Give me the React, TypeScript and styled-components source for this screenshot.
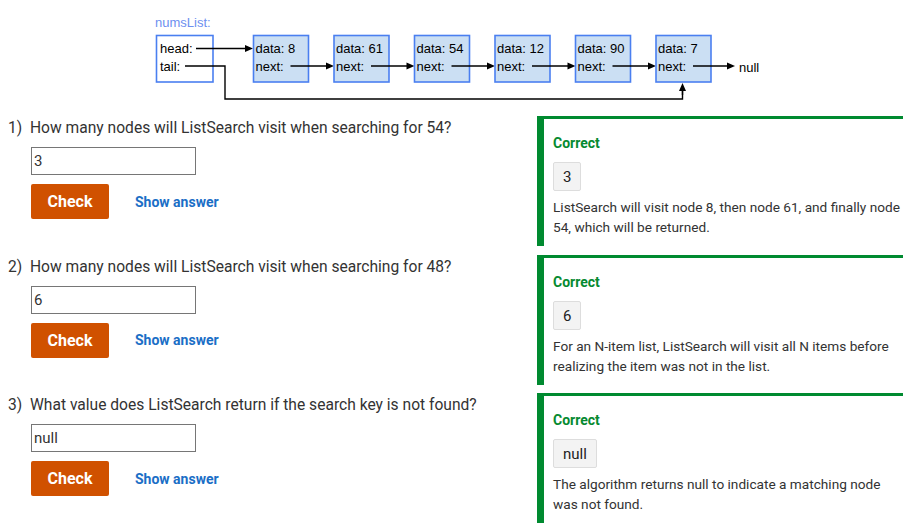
import React, { FC } from 'react';
import styled, { createGlobalStyle } from 'styled-components';

const GlobalStyle = createGlobalStyle`
	body {
		margin: 0;
		background: #ffffff;
		font-family: Roboto, 'Liberation Sans', Arial, sans-serif;
		color: #333333;
	}
`;

const Page = styled('div')`
	width: 921px;
	height: 524px;
	overflow: hidden;
`;

const Figure = styled('div')`
	height: 116px;
	padding-left: 150px;
`;

const Row = styled('div')`
	display: flex;
	height: 138.5px;
`;

const Question = styled('div')`
	width: 537px;
	padding: 3px 0 0 8px;
	box-sizing: border-box;
`;

const Prompt = styled('div')`
	display: flex;
	font-size: 15.6px;
	line-height: 19px;
	color: #333333;
`;

const Num = styled('span')`
	width: 22px;
	flex: none;
`;

const AnswerInput = styled('input')`
	display: block;
	margin: 9px 0 0 23px;
	width: 165px;
	height: 28px;
	box-sizing: border-box;
	border: 1px solid #767676;
	padding: 0 2px;
	font-family: Roboto, sans-serif;
	font-size: 15px;
	color: #333333;
	outline: none;
`;

const Actions = styled('div')`
	display: flex;
	align-items: center;
	gap: 26px;
	margin: 9px 0 0 23px;
`;

const CheckButton = styled('button')`
	width: 78px;
	height: 35px;
	border: none;
	border-radius: 2px;
	background: #d05100;
	color: #ffffff;
	font-family: Roboto, sans-serif;
	font-weight: 700;
	font-size: 16px;
	cursor: pointer;
`;

const ShowAnswer = styled('a')`
	color: #1a6ec6;
	font-weight: 700;
	font-size: 14px;
	cursor: pointer;
`;

const Feedback = styled('div')`
	width: 366px;
	height: 130px;
	box-sizing: border-box;
	border-top: 3px solid #008a30;
	border-left: 7px solid #008a30;
	padding: 16px 0 0 9px;
`;

const Verdict = styled('div')`
	color: #068a30;
	font-weight: 700;
	font-size: 14px;
	line-height: 16px;
`;

const Solution = styled('div')`
	display: inline-block;
	margin-top: 11px;
	height: 29px;
	line-height: 29px;
	padding: 0 9px;
	box-sizing: border-box;
	background: #f3f3f3;
	border: 1px solid #dddddd;
	border-radius: 2px;
	font-size: 15px;
	color: #222222;
`;

const Explanation = styled('div')`
	margin-top: 6px;
	font-size: 13.65px;
	line-height: 20px;
	color: #333333;
	width: 352px;
`;

const NODES = [8, 61, 54, 12, 90, 7];
const NODE_X = (i: number) => 253.5 + i * 80.5;

const Arrow: FC<{ x1: number; y1: number; x2: number; y2: number }> = ({
	x1,
	y1,
	x2,
	y2,
}) => {
	const horizontal = y1 === y2;
	const head = horizontal
		? `${x2},${y2} ${x2 - 8},${y2 - 3.5} ${x2 - 8},${y2 + 3.5}`
		: `${x2},${y2} ${x2 - 3.5},${y2 + 8} ${x2 + 3.5},${y2 + 8}`;
	return (
		<g>
			<line
				x1={x1}
				y1={y1}
				x2={horizontal ? x2 - 6 : x2}
				y2={horizontal ? y2 : y2 + 6}
				stroke="#000"
				strokeWidth={1.4}
			/>
			<polygon points={head} fill="#000" />
		</g>
	);
};

const ListDiagram: FC = () => (
	<svg width={620} height={106} viewBox="150 0 620 106">
		<g fontFamily="'Liberation Sans', Arial, sans-serif" fontSize={13}>
			<text x={155} y={27} fill="#6d8ff0">
				{'numsList:'}
			</text>
			<rect
				x={156.5}
				y={35.5}
				width={56.5}
				height={46.5}
				fill="#ffffff"
				stroke="#4a7ff0"
				strokeWidth={1.6}
			/>
			<text x={160} y={53} fill="#000">
				{'head:'}
			</text>
			<text x={160} y={71} fill="#000">
				{'tail:'}
			</text>
			<Arrow x1={196} y1={48.5} x2={253} y2={48.5} />
			<polyline
				points="185,66 225,66 225,99 682.5,99 682.5,88"
				fill="none"
				stroke="#000"
				strokeWidth={1.4}
			/>
			<Arrow x1={682.5} y1={95} x2={682.5} y2={83} />
			{NODES.map((n, i) => {
				const x = NODE_X(i);
				const last = i === NODES.length - 1;
				return (
					<g key={n}>
						<rect
							x={x}
							y={35.5}
							width={55}
							height={46.5}
							fill="#cbdff3"
							stroke="#4a7ff0"
							strokeWidth={1.6}
						/>
						<text x={x + 2} y={53} fill="#000">
							{`data: ${n}`}
						</text>
						<text x={x + 2} y={71} fill="#000">
							{'next:'}
						</text>
						<Arrow
							x1={x + 37}
							y1={66}
							x2={last ? x + 79 : NODE_X(i + 1)}
							y2={66}
						/>
					</g>
				);
			})}
			<text x={739} y={72} fill="#000">
				{'null'}
			</text>
		</g>
	</svg>
);

const QUESTIONS = [
	{
		prompt: 'How many nodes will ListSearch visit when searching for 54?',
		answer: '3',
		explanation:
			'ListSearch will visit node 8, then node 61, and finally node 54, which will be returned.',
	},
	{
		prompt: 'How many nodes will ListSearch visit when searching for 48?',
		answer: '6',
		explanation:
			'For an N-item list, ListSearch will visit all N items before realizing the item was not in the list.',
	},
	{
		prompt: 'What value does ListSearch return if the search key is not found?',
		answer: 'null',
		explanation:
			'The algorithm returns null to indicate a matching node was not found.',
	},
];

const App: FC = () => (
	<Page>
		<GlobalStyle />
		<Figure>
			<ListDiagram />
		</Figure>
		{QUESTIONS.map((q, i) => (
			<Row key={q.prompt}>
				<Question>
					<Prompt>
						<Num>{`${i + 1})`}</Num>
						<span>{q.prompt}</span>
					</Prompt>
					<AnswerInput defaultValue={q.answer} />
					<Actions>
						<CheckButton>{'Check'}</CheckButton>
						<ShowAnswer>{'Show answer'}</ShowAnswer>
					</Actions>
				</Question>
				<Feedback>
					<Verdict>{'Correct'}</Verdict>
					<Solution>{q.answer}</Solution>
					<Explanation>{q.explanation}</Explanation>
				</Feedback>
			</Row>
		))}
	</Page>
);

export default App;
